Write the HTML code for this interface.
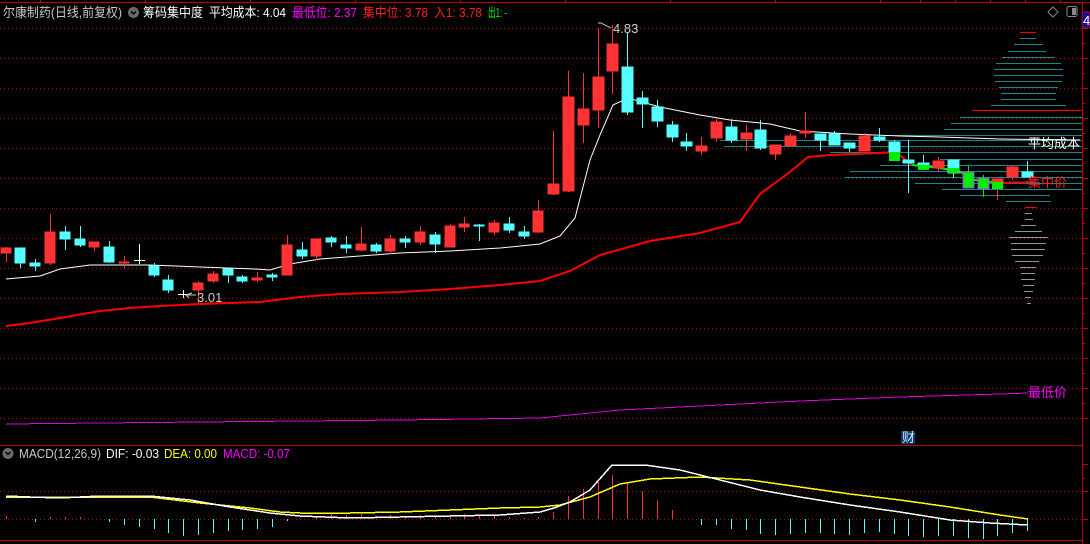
<!DOCTYPE html>
<html><head><meta charset="utf-8"><style>
html,body{margin:0;padding:0;background:#000;width:1090px;height:544px;overflow:hidden}
svg{display:block}
text{font-family:"Liberation Sans","Noto Sans CJK SC",sans-serif;font-size:13px}
</style></head><body>
<svg width="1090" height="544" viewBox="0 0 1090 544" shape-rendering="crispEdges">
<g stroke="#c00000" stroke-width="1">
<line x1="0" y1="2.5" x2="1090" y2="2.5"/>
<line x1="1082.5" y1="2" x2="1082.5" y2="544"/>
<line x1="0" y1="445.5" x2="1082" y2="445.5"/>
<line x1="0" y1="540.5" x2="1082" y2="540.5"/>
<line x1="40.5" y1="0" x2="40.5" y2="2"/><line x1="145.5" y1="0" x2="145.5" y2="2"/><line x1="250.5" y1="0" x2="250.5" y2="2"/><line x1="355.5" y1="0" x2="355.5" y2="2"/><line x1="460.5" y1="0" x2="460.5" y2="2"/><line x1="565.5" y1="0" x2="565.5" y2="2"/><line x1="670.5" y1="0" x2="670.5" y2="2"/><line x1="775.5" y1="0" x2="775.5" y2="2"/><line x1="880.5" y1="0" x2="880.5" y2="2"/><line x1="920.5" y1="0" x2="920.5" y2="2"/><line x1="955.5" y1="0" x2="955.5" y2="2"/><line x1="990.5" y1="0" x2="990.5" y2="2"/><line x1="1025.5" y1="0" x2="1025.5" y2="2"/><line x1="1060.5" y1="0" x2="1060.5" y2="2"/>
</g>
<g stroke="#c00000">
<path d="M1082 28.5h6M1082 43.5h3M1082 58.5h6M1082 73.5h3M1082 88.5h6M1082 103.5h3M1082 118.5h6M1082 133.5h3M1082 148.5h6M1082 163.5h3M1082 178.5h6M1082 193.5h3M1082 208.5h6M1082 223.5h3M1082 238.5h6M1082 253.5h3M1082 268.5h6M1082 283.5h3M1082 298.5h6M1082 313.5h3M1082 328.5h6M1082 343.5h3M1082 358.5h6M1082 373.5h3M1082 388.5h6M1082 403.5h3M1082 418.5h6M1082 464.5h6M1082 478.5h3M1082 491.5h6M1082 519.5h6"/>
</g>
<g stroke="#a00000" stroke-dasharray="1,3">
<path d="M0 28.5H1082M0 58.5H1082M0 88.5H1082M0 118.5H1082M0 148.5H1082M0 178.5H1082M0 208.5H1082M0 238.5H1082M0 268.5H1082M0 298.5H1082M0 328.5H1082M0 358.5H1082M0 388.5H1082M0 418.5H1082M0 491.5H1082M0 519.5H1082"/>
</g>
<g stroke="#178787" stroke-width="1">
<path d="M1020 38.5h16M1014 44.5h29M1008 51.5h38M1002 57.5h53M996 63.5h65M994 69.5h69M994 75.5h69M995 81.5h67M999 87.5h59M1001 93.5h55M1001 99.5h55M991 105.5h75M960 117.5h122M951 123.5h131M944 129.5h138M894 135.5h188M720 140.5h362M724 146.5h358M830 152.5h252M940 159.5h142M880 165.5h202M850 171.5h232M845 177.5h237M915 183.5h167M942 189.5h140M960 195.5h90M1006 201.5h45"/>
</g>
<g stroke="#8a9a9a"><path d="M1025 213.5h7M1025 219.5h8M1021 225.5h15M1015 231.5h27M1009 237.5h39M1011 243.5h35M1011 249.5h34M1012 255.5h31M1015 261.5h24M1020 267.5h16M1021 273.5h14M1021 279.5h14M1023 285.5h11M1024 291.5h9M1025 297.5h6M1027 303.5h4"/></g>
<g stroke="#ff0000"><path d="M1020 32.5h16M972 110.5h110M1025 207.5h12"/></g>
<polyline fill="none" stroke="#e000e0" stroke-width="1" points="6,424 100,423 200,422 300,421 400,420 540,418 600,412 620,410 700,406 800,401 900,397 1000,394 1028,393"/>
<polyline fill="none" stroke="#ff0000" stroke-width="2" shape-rendering="auto" points="6,326 30,323 60,318 100,311 130,308 160,306 200,304 260,302 300,297 340,294 400,292 450,289 500,285 540,281 570,271 600,255 650,241 700,233 740,222 760,194 790,172 808,157 830,155 880,153 896,152 912,165"/>
<polyline fill="none" stroke="#00ee00" stroke-width="2" shape-rendering="auto" points="912,165 940,168 960,172 975,180 1000,183"/>
<polyline fill="none" stroke="#ff0000" stroke-width="2" points="1000,183 1035,182"/>
<polyline fill="none" stroke="#ffffff" stroke-width="1" shape-rendering="auto" points="6,279 40,276 60,269 90,265 150,265 200,267 255,269 270,270 290,264 320,259 360,256 400,253 450,251 500,248 540,244 560,236 575,218 590,160 600,135 613,105 628,98 660,107 700,115 730,120 770,124 800,131 850,134 900,136 940,137 1000,139 1080,140"/>
<g>
<g stroke="#ff3333" fill="#ff3333">
<line x1="6.5" y1="247" x2="6.5" y2="262"/><rect x="1" y="248" width="10" height="5"/>
<line x1="50.5" y1="214" x2="50.5" y2="265"/><rect x="45" y="232" width="10" height="31"/>
<line x1="94.5" y1="242" x2="94.5" y2="251"/><rect x="89" y="242" width="10" height="5"/>
<line x1="124.5" y1="256" x2="124.5" y2="268"/><rect x="119" y="262" width="10" height="1"/>
<line x1="198.5" y1="281" x2="198.5" y2="303"/><rect x="193" y="283" width="10" height="7"/>
<line x1="213.5" y1="271" x2="213.5" y2="283"/><rect x="208" y="274" width="10" height="7"/>
<line x1="257.5" y1="272" x2="257.5" y2="282"/><rect x="252" y="278" width="10" height="2"/>
<line x1="287.5" y1="235" x2="287.5" y2="275"/><rect x="282" y="245" width="10" height="30"/>
<line x1="316.5" y1="239" x2="316.5" y2="260"/><rect x="311" y="239" width="10" height="17"/>
<line x1="361.5" y1="227" x2="361.5" y2="251"/><rect x="356" y="244" width="10" height="6"/>
<line x1="390.5" y1="235" x2="390.5" y2="254"/><rect x="385" y="239" width="10" height="12"/>
<line x1="420.5" y1="226" x2="420.5" y2="245"/><rect x="415" y="232" width="10" height="10"/>
<line x1="450.5" y1="224" x2="450.5" y2="247"/><rect x="445" y="226" width="10" height="21"/>
<line x1="464.5" y1="217" x2="464.5" y2="232"/><rect x="459" y="224" width="10" height="3"/>
<line x1="494.5" y1="220" x2="494.5" y2="235"/><rect x="489" y="223" width="10" height="9"/>
<line x1="538.5" y1="200" x2="538.5" y2="233"/><rect x="533" y="211" width="10" height="21"/>
<line x1="553.5" y1="131" x2="553.5" y2="195"/><rect x="548" y="184" width="11" height="10"/>
<line x1="568.5" y1="71" x2="568.5" y2="192"/><rect x="563" y="97" width="11" height="94"/>
<line x1="583.5" y1="73" x2="583.5" y2="143"/><rect x="578" y="109" width="11" height="16"/>
<line x1="598.5" y1="28" x2="598.5" y2="128"/><rect x="593" y="77" width="11" height="33"/>
<line x1="612.5" y1="25" x2="612.5" y2="94"/><rect x="607" y="44" width="11" height="27"/>
<line x1="701.5" y1="137" x2="701.5" y2="155"/><rect x="696" y="146" width="11" height="5"/>
<line x1="716.5" y1="119" x2="716.5" y2="142"/><rect x="711" y="122" width="11" height="16"/>
<line x1="746.5" y1="125" x2="746.5" y2="151"/><rect x="741" y="133" width="11" height="6"/>
<line x1="775.5" y1="145" x2="775.5" y2="160"/><rect x="770" y="145" width="11" height="9"/>
<line x1="790.5" y1="133" x2="790.5" y2="146"/><rect x="785" y="136" width="11" height="10"/>
<line x1="805.5" y1="112" x2="805.5" y2="138"/><rect x="800" y="131" width="11" height="2"/>
<line x1="864.5" y1="133" x2="864.5" y2="151"/><rect x="859" y="136" width="11" height="15"/>
<line x1="938.5" y1="157" x2="938.5" y2="172"/><rect x="933" y="161" width="11" height="7"/>
<line x1="997.5" y1="179" x2="997.5" y2="200"/><rect x="992" y="179" width="11" height="3"/>
<line x1="1012.5" y1="165" x2="1012.5" y2="180"/><rect x="1007" y="167" width="11" height="10"/>
</g>
<g stroke="#55ffff" fill="#55ffff">
<line x1="20.5" y1="248" x2="20.5" y2="268"/><rect x="15" y="248" width="10" height="15"/>
<line x1="35.5" y1="259" x2="35.5" y2="271"/><rect x="30" y="263" width="10" height="3"/>
<line x1="65.5" y1="226" x2="65.5" y2="250"/><rect x="60" y="232" width="10" height="7"/>
<line x1="80.5" y1="226" x2="80.5" y2="247"/><rect x="75" y="239" width="10" height="6"/>
<line x1="109.5" y1="241" x2="109.5" y2="263"/><rect x="104" y="247" width="10" height="15"/>
<line x1="154.5" y1="263" x2="154.5" y2="277"/><rect x="149" y="266" width="10" height="9"/>
<line x1="168.5" y1="275" x2="168.5" y2="293"/><rect x="163" y="280" width="10" height="10"/>
<line x1="228.5" y1="269" x2="228.5" y2="283"/><rect x="223" y="269" width="10" height="6"/>
<line x1="242.5" y1="275" x2="242.5" y2="283"/><rect x="237" y="277" width="10" height="4"/>
<line x1="272.5" y1="273" x2="272.5" y2="281"/><rect x="267" y="275" width="10" height="2"/>
<line x1="302.5" y1="242" x2="302.5" y2="259"/><rect x="297" y="250" width="10" height="6"/>
<line x1="331.5" y1="236" x2="331.5" y2="247"/><rect x="326" y="238" width="10" height="4"/>
<line x1="346.5" y1="236" x2="346.5" y2="253"/><rect x="341" y="245" width="10" height="3"/>
<line x1="376.5" y1="243" x2="376.5" y2="253"/><rect x="371" y="245" width="10" height="6"/>
<line x1="405.5" y1="236" x2="405.5" y2="248"/><rect x="400" y="239" width="10" height="3"/>
<line x1="435.5" y1="232" x2="435.5" y2="253"/><rect x="430" y="235" width="10" height="9"/>
<line x1="479.5" y1="224" x2="479.5" y2="241"/><rect x="474" y="225" width="10" height="1"/>
<line x1="509.5" y1="217" x2="509.5" y2="233"/><rect x="504" y="224" width="10" height="6"/>
<line x1="524.5" y1="226" x2="524.5" y2="239"/><rect x="519" y="232" width="10" height="4"/>
<line x1="627.5" y1="32" x2="627.5" y2="115"/><rect x="622" y="67" width="11" height="45"/>
<line x1="642.5" y1="91" x2="642.5" y2="128"/><rect x="637" y="98" width="11" height="6"/>
<line x1="657.5" y1="100" x2="657.5" y2="127"/><rect x="652" y="107" width="11" height="14"/>
<line x1="672.5" y1="121" x2="672.5" y2="142"/><rect x="667" y="125" width="11" height="12"/>
<line x1="686.5" y1="133" x2="686.5" y2="151"/><rect x="681" y="142" width="11" height="4"/>
<line x1="731.5" y1="119" x2="731.5" y2="143"/><rect x="726" y="127" width="11" height="13"/>
<line x1="760.5" y1="120" x2="760.5" y2="150"/><rect x="755" y="130" width="11" height="18"/>
<line x1="820.5" y1="134" x2="820.5" y2="151"/><rect x="815" y="134" width="11" height="6"/>
<line x1="834.5" y1="131" x2="834.5" y2="145"/><rect x="829" y="134" width="11" height="11"/>
<line x1="849.5" y1="143" x2="849.5" y2="152"/><rect x="844" y="143" width="11" height="5"/>
<line x1="879.5" y1="128" x2="879.5" y2="142"/><rect x="874" y="137" width="11" height="3"/>
<line x1="894.5" y1="140" x2="894.5" y2="161"/><rect x="889" y="142" width="11" height="10"/>
<line x1="908.5" y1="140" x2="908.5" y2="193"/><rect x="903" y="160" width="11" height="3"/>
<line x1="923.5" y1="155" x2="923.5" y2="170"/><rect x="918" y="163" width="11" height="2"/>
<line x1="953.5" y1="160" x2="953.5" y2="178"/><rect x="948" y="160" width="11" height="13"/>
<line x1="1027.5" y1="161" x2="1027.5" y2="177"/><rect x="1022" y="172" width="11" height="5"/>
</g>
<g fill="#00ee00">
<rect x="889" y="152" width="11" height="9"/>
<rect x="918" y="165" width="11" height="5"/>
<rect x="948" y="168" width="11" height="5"/>
<rect x="963" y="172" width="11" height="16" stroke="#b040ff"/>
<rect x="978" y="178" width="11" height="11" stroke="#b040ff"/>
<rect x="992" y="182" width="11" height="7"/>
</g>
<g stroke="#00ee00"><line x1="968.5" y1="166" x2="968.5" y2="172"/><line x1="983.5" y1="175" x2="983.5" y2="197"/></g>
<g stroke="#ffffff">
<line x1="139.5" y1="244" x2="139.5" y2="264"/><line x1="134" y1="260.5" x2="145" y2="260.5"/>
<line x1="183.5" y1="290" x2="183.5" y2="298"/><line x1="178" y1="294.5" x2="189" y2="294.5"/>
</g>
</g>
<path d="M186 295l6 -2M186 295l3 3M186 295h10" stroke="#cccccc" fill="none"/>
<text x="197" y="302" fill="#cccccc" font-size="12">3.01</text>
<path d="M598 23h3l10 5" stroke="#cccccc" fill="none"/>
<text x="613" y="33" fill="#cccccc" font-size="12">4.83</text>
<text x="1028" y="148" fill="#ffffff">平均成本</text>
<text x="1028" y="187" fill="#ff2020">集中价</text>
<text x="1028" y="397" fill="#ff00ff">最低价</text>
<g font-size="12" lengthAdjust="spacingAndGlyphs">
<text x="3" y="17" fill="#c8c8c8" textLength="119" lengthAdjust="spacingAndGlyphs">尔康制药(日线,前复权)</text>
<text x="143" y="17" fill="#ffffff" textLength="60" lengthAdjust="spacingAndGlyphs">筹码集中度</text>
<text x="209" y="17" fill="#ffffff" textLength="77" lengthAdjust="spacingAndGlyphs">平均成本: 4.04</text>
<text x="292" y="17" fill="#ff00ff" textLength="65" lengthAdjust="spacingAndGlyphs">最低位: 2.37</text>
<text x="363" y="17" fill="#ff2020" textLength="65" lengthAdjust="spacingAndGlyphs">集中位: 3.78</text>
<text x="434" y="17" fill="#ff2020" textLength="48" lengthAdjust="spacingAndGlyphs">入1: 3.78</text>
<text x="488" y="17" fill="#00ff00" textLength="19" lengthAdjust="spacingAndGlyphs">出1: -</text>
</g>
<circle cx="133.5" cy="12.5" r="5.5" fill="#6a6a6a"/>
<path d="M131 11.5l2.5 2.5 2.5-2.5" stroke="#000" stroke-width="1.5" fill="none" shape-rendering="auto"/>
<path d="M1053 7l5 5-5 5-5-5z" stroke="#888" fill="none" shape-rendering="auto"/>
<rect x="1067" y="6.5" width="10" height="10" rx="2" stroke="#888" fill="none"/>
<rect x="1072" y="8" width="4" height="7" fill="#888"/>
<rect x="1082" y="12" width="8" height="16" fill="#1010a0" stroke="#c00000"/>
<text x="1083" y="25" fill="#ffffff" font-size="12">4</text>
<rect x="901" y="431" width="14" height="13" fill="#0c3c6c"/>
<text x="902" y="442" fill="#d0e8ff" font-size="12">财</text>
<circle cx="8" cy="453.5" r="5.5" fill="#6a6a6a"/>
<path d="M5.5 452l2.5 2.5 2.5-2.5" stroke="#000" stroke-width="1.3" fill="none" shape-rendering="auto"/>
<text x="19" y="458" fill="#c8c8c8" font-size="12" textLength="82" lengthAdjust="spacingAndGlyphs">MACD(12,26,9)</text>
<text x="106" y="458" fill="#ffffff" font-size="12" textLength="53" lengthAdjust="spacingAndGlyphs">DIF: -0.03</text>
<text x="164" y="458" fill="#ffff00" font-size="12" textLength="53" lengthAdjust="spacingAndGlyphs">DEA: 0.00</text>
<text x="223" y="458" fill="#ff00ff" font-size="12" textLength="67" lengthAdjust="spacingAndGlyphs">MACD: -0.07</text>
<g stroke="#ff3333">
<path d="M6.5 519v-3M50.5 519v-2M65.5 519v-2M80.5 519v-2M316.5 519v-3M331.5 519v-6M346.5 519v-4M361.5 519v-5M376.5 519v-3M390.5 519v-4M405.5 519v-3M420.5 519v-4M435.5 519v-2M450.5 519v-4M464.5 519v-5M479.5 519v-4M494.5 519v-4M509.5 519v-2M524.5 519v-1M538.5 519v-2M553.5 519v-7M568.5 519v-23M583.5 519v-30M598.5 519v-37M612.5 519v-44M627.5 519v-36M642.5 519v-28M657.5 519v-19M672.5 519v-9"/>
</g>
<g stroke="#55ffff">
<path d="M35.5 519v3M109.5 519v3M124.5 519v6M139.5 519v8M154.5 519v10M168.5 519v14M183.5 519v17M198.5 519v16M213.5 519v14M228.5 519v12M242.5 519v11M257.5 519v10M272.5 519v8M287.5 519v2M701.5 519v6M716.5 519v6M731.5 519v10M746.5 519v11M760.5 519v15M775.5 519v16M790.5 519v15M805.5 519v14M820.5 519v14M834.5 519v15M849.5 519v16M864.5 519v14M879.5 519v13M894.5 519v15M908.5 519v17M923.5 519v18M938.5 519v17M953.5 519v17M968.5 519v19M983.5 519v20M997.5 519v17M1012.5 519v14M1027.5 519v12"/>
</g>
<polyline fill="none" stroke="#ffff00" stroke-width="1.5" points="6,497 100,497 150,497 200,503 250,508 280,512 300,513 350,513 400,512 450,510 500,508 540,507 560,505 590,497 620,484 650,479 700,477 750,480 800,487 850,494 900,500 950,507 1000,515 1028,519"/>
<polyline fill="none" stroke="#ffffff" stroke-width="1.5" points="6,496 30,497 60,498 100,496 150,496 190,500 230,507 270,513 300,516 350,518 400,517 450,516 500,515 540,512 554,508 570,502 590,490 612,465 645,465 680,470 720,480 760,490 800,497 850,505 900,512 950,520 990,523 1028,525"/>
</svg>
</body></html>
